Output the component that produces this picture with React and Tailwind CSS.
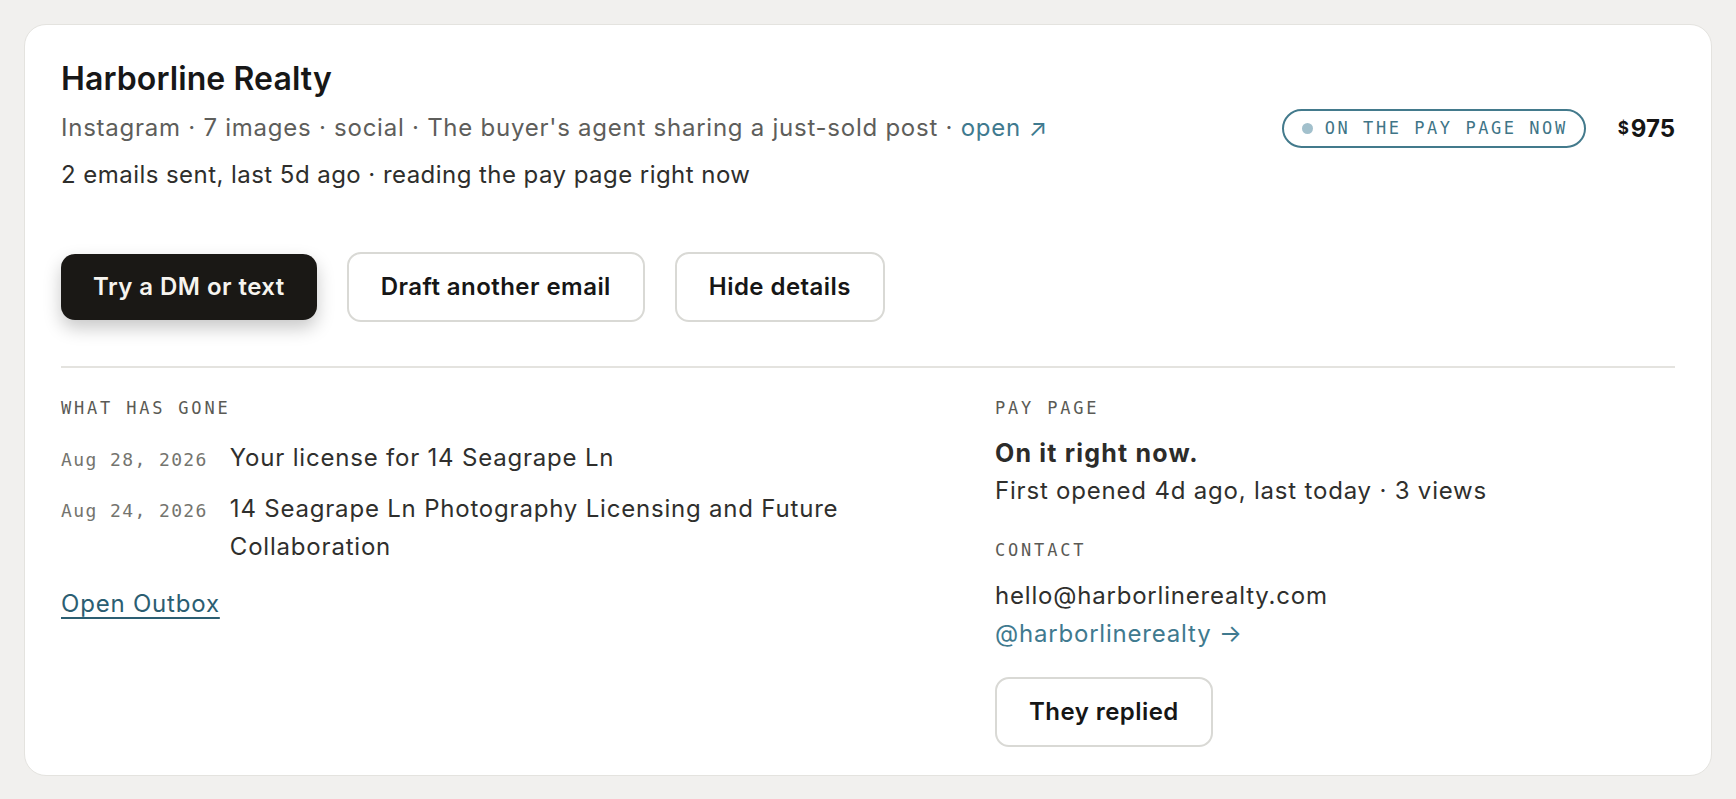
import React from "react";

const sans = "font-['Inter','Noto_Sans',sans-serif]";
const mono = "font-['DejaVu_Sans_Mono','Liberation_Mono',monospace]";

function OutlineButton({ children }) {
  return (
    <button className="rounded-[14px] border-2 border-[#d9d9d5] bg-white px-8 py-[15px] text-[24px] font-semibold leading-[36px] tracking-[0.45px] text-[#161616]">
      {children}
    </button>
  );
}

export default function App() {
  return (
    <div className={`${sans} min-h-[799px] bg-[#f1f0ee] px-6 pt-6 pb-[26px]`}>
      <div className="rounded-[22px] border border-[#e4e3df] bg-white pl-[36px] pr-[36px] pt-[34px] pb-[28px]">
        {/* Header */}
        <div className="flex items-center justify-between">
          <div>
            <h1 className="text-[32px] font-semibold leading-[40px] tracking-[0.1px] text-[#171717]">
              Harborline Realty
            </h1>
            <p className="mt-[11px] text-[24px] leading-[36px] tracking-[0.75px] text-[#5e5e5b]">
              Instagram · 7 images · social · The buyer's agent sharing a just-sold post ·{" "}
              <a className="text-[#3f7a8f]">open ↗</a>
            </p>
            <p className="mt-[11px] text-[24px] leading-[36px] tracking-[0.45px] text-[#2e2e2c]">
              2 emails sent, last 5d ago · reading the pay page right now
            </p>
          </div>
          <div className="mt-[5px] flex items-center gap-8">
            <div className="flex h-[39px] items-center gap-3 rounded-full border-2 border-[#437a8c] pl-[18px] pr-[16px]">
              <span className="h-[11px] w-[11px] rounded-full bg-[#a2c0cc]" />
              <span className={`${mono} text-[17px] tracking-[2.55px] text-[#3f7587]`}>
                ON THE PAY PAGE NOW
              </span>
            </div>
            <div className="font-bold text-[#151515]">
              <span className="mr-[2px] align-[3px] text-[17px]">$</span>
              <span className="text-[24px]">975</span>
            </div>
          </div>
        </div>

        {/* Actions */}
        <div className="mt-[59px] flex items-center gap-[30px]">
          <button className="rounded-[14px] bg-[#1a1815] px-8 py-[15px] text-[24px] font-semibold leading-[36px] tracking-[0.45px] text-[#f6f4ef] shadow-[0_8px_18px_rgba(0,0,0,0.22)]">
            Try a DM or text
          </button>
          <OutlineButton>Draft another email</OutlineButton>
          <OutlineButton>Hide details</OutlineButton>
        </div>

        {/* Details */}
        <div className="mt-[44px] grid grid-cols-[minmax(0,1fr)_680px] gap-x-16 border-t-2 border-[#e4e3df] pt-[28px]">
          <div>
            <div className={`${mono} text-[17px] leading-[24px] tracking-[2.8px] text-[#5a5a55]`}>
              WHAT HAS GONE
            </div>
            <div className="mt-[19px] flex flex-col gap-[13px]">
              <div className="flex items-baseline gap-[22px]">
                <span className={`${mono} shrink-0 text-[18px] tracking-[1.4px] text-[#74746e]`}>
                  Aug 28, 2026
                </span>
                <span className="text-[24px] leading-[38px] tracking-[0.8px] text-[#2f2f2d]">
                  Your license for 14 Seagrape Ln
                </span>
              </div>
              <div className="flex items-baseline gap-[22px]">
                <span className={`${mono} shrink-0 text-[18px] tracking-[1.4px] text-[#74746e]`}>
                  Aug 24, 2026
                </span>
                <span className="text-[24px] leading-[38px] tracking-[0.8px] text-[#2f2f2d]">
                  14 Seagrape Ln Photography Licensing and Future Collaboration
                </span>
              </div>
            </div>
            <a className="mt-[19px] inline-block text-[24px] leading-[38px] tracking-[0.8px] text-[#2b5e72] underline decoration-2 underline-offset-[5px]">
              Open Outbox
            </a>
          </div>

          <div>
            <div className={`${mono} text-[17px] leading-[24px] tracking-[2.8px] text-[#5a5a55]`}>
              PAY PAGE
            </div>
            <div className="mt-[15px] text-[25px] font-bold leading-[37px] tracking-[1.2px] text-[#2c2c2a]">
              On it right now.
            </div>
            <div className="text-[24px] leading-[37px] tracking-[0.8px] text-[#2f2f2d]">
              First opened 4d ago, last today · 3 views
            </div>
            <div className={`${mono} mt-[29px] text-[17px] leading-[24px] tracking-[2.8px] text-[#5a5a55]`}>
              CONTACT
            </div>
            <div className="mt-[15px] text-[24px] leading-[38px] tracking-[0.8px] text-[#2f2f2d]">
              hello@harborlinerealty.com
            </div>
            <a className="block text-[24px] leading-[38px] tracking-[0.8px] text-[#3f7a8f]">@harborlinerealty →</a>
            <div className="mt-6">
              <OutlineButton>They replied</OutlineButton>
            </div>
          </div>
        </div>
      </div>
    </div>
  );
}
